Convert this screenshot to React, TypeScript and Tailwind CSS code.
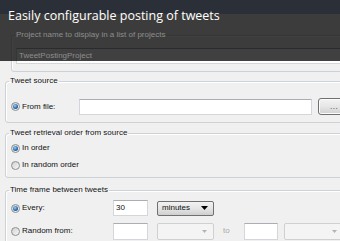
import React from 'react';

const Radio: React.FC<{ checked?: boolean }> = ({ checked }) => (
  <span className="flex h-[9px] w-[9px] shrink-0 items-center justify-center rounded-full border border-[#8e8f8f] bg-gradient-to-br from-[#cfd0d1] to-[#f9f9f9]">
    {checked && (
      <span className="h-[5px] w-[5px] rounded-full bg-[radial-gradient(circle_at_40%_35%,#9fd0f5,#2a6db5_55%,#0e3a70)]" />
    )}
  </span>
);

const TextBox: React.FC<{ className?: string; children?: React.ReactNode }> = ({ className, children }) => (
  <div
    className={
      'flex items-center border border-[#d3d7dc] border-t-[#abadb3] bg-white pl-[2px] ' + (className || '')
    }
  >
    {children}
  </div>
);

const Arrow: React.FC<{ disabled?: boolean }> = ({ disabled }) =>
  disabled ? (
    <svg width="5" height="3" viewBox="0 0 5 3" className="shrink-0">
      <polygon points="0,0 5,0 2.5,3" fill="#b4b4b4" />
    </svg>
  ) : (
    <svg width="7" height="4" viewBox="0 0 7 4" className="shrink-0">
      <polygon points="0,0 7,0 3.5,4" fill="#000" />
    </svg>
  );

// group box, legend sits on the top border like a WinForms GroupBox
const Group: React.FC<{ title: string; className?: string; children: React.ReactNode }> = ({
  title,
  className,
  children,
}) => (
  <fieldset
    className={
      'rounded-[3px] border border-[#cdd2d6] pl-[4px] shadow-[inset_1px_1px_0_#fff] ' + (className || '')
    }
  >
    <legend className="-ml-[1px] px-[1px] leading-[8px]">{title}</legend>
    {children}
  </fieldset>
);

export default function App() {
  return (
    <div className="relative h-[241px] w-[340px] overflow-hidden bg-[#f0f0f0] font-['Liberation_Sans',Arial,sans-serif] text-[8px] text-[#111]">
      {/* dark caption band over the top of the form */}
      <div className="absolute left-0 top-0 z-[5] flex h-[61px] w-full flex-col">
        <div className="h-[14px] bg-[#2b3038]" />
        <div className="flex-1 bg-black/75" />
        <div className="absolute left-[8px] top-[8px] font-['Open_Sans',sans-serif] text-[12.5px] leading-[16px] text-white">
          Easily configurable posting of tweets
        </div>
      </div>

      <div className="pl-[11px] pt-[31px]">
        <fieldset className="w-[360px] rounded-[3px] border border-[#cdd2d6] pb-[7px] pl-[4px] shadow-[inset_1px_1px_0_#fff]">
          <legend className="relative z-10 -ml-[1px] px-[1px] leading-[8px] text-[#8d8d8d]">
            Project name to display in a list of projects
          </legend>
          <TextBox className="mt-[9px] h-[16px] w-[340px]">
            <span className="relative z-10 text-[#8d8d8d]">TweetPostingProject</span>
          </TextBox>
        </fieldset>
      </div>

      <div className="flex flex-col pl-[5px]">
        <Group title="Tweet source" className="mt-[5px] w-[360px] pb-[7px]">
          <div className="mt-[13px] flex h-[17px] items-center">
            <div className="flex w-[69px] items-center gap-[2px] pl-[1px]">
              <Radio checked />
              <span>From file:</span>
            </div>
            <TextBox className="h-[16px] w-[233px]" />
            <div className="ml-[6px] flex h-[17px] w-[28px] items-center justify-start rounded-[3px] border border-[#707070] bg-gradient-to-b from-[#f3f3f3] via-[#e6e6e6] to-[#d0d0d0] pl-[11px] shadow-[inset_0_0_0_1px_#fcfcfc]">
              <span className="leading-[8px] tracking-[0.5px] text-[#333]">...</span>
            </div>
          </div>
        </Group>

        <Group title="Tweet retrieval order from source" className="mt-[6px] w-[360px] pb-[6px]">
          <div className="mt-[5px] flex flex-col gap-[5px]">
            <div className="flex h-[12px] items-center gap-[2px] pl-[1px]">
              <Radio checked />
              <span>In order</span>
            </div>
            <div className="flex h-[12px] items-center gap-[2px] pl-[1px]">
              <Radio />
              <span>In random order</span>
            </div>
          </div>
        </Group>

        <Group title="Time frame between tweets" className="mt-[8px] w-[360px] pb-[6px]">
          <div className="mt-[6px] flex flex-col gap-[7px]">
            <div className="flex h-[16px] items-center">
              <div className="flex w-[103px] items-center gap-[2px] pl-[1px]">
                <Radio checked />
                <span>Every:</span>
              </div>
              <TextBox className="h-[16px] w-[35px]">
                <span>30</span>
              </TextBox>
              <div className="ml-[9px] flex h-[15px] w-[57px] items-center justify-between rounded-[2px] border border-[#707070] bg-gradient-to-b from-[#f2f2f2] via-[#e5e5e5] to-[#cfcfcf] pl-[4px] pr-[5px]">
                <span>minutes</span>
                <Arrow />
              </div>
            </div>
            <div className="flex h-[16px] items-center">
              <div className="flex w-[103px] items-center gap-[2px] pl-[1px]">
                <Radio />
                <span>Random from:</span>
              </div>
              <TextBox className="h-[17px] w-[35px]" />
              <div className="ml-[9px] flex h-[17px] w-[57px] items-center justify-end rounded-[2px] border border-[#d0d0d0] bg-[#f4f4f4] pr-[6px]">
                <Arrow disabled />
              </div>
              <span className="w-[30px] pl-[9px] text-[#a8a8a8]">to</span>
              <TextBox className="h-[17px] w-[34px]" />
              <div className="ml-[6px] flex h-[17px] w-[60px] items-center justify-end rounded-[2px] border border-[#d0d0d0] bg-[#f4f4f4] pr-[6px]">
                <Arrow disabled />
              </div>
            </div>
          </div>
        </Group>
      </div>
    </div>
  );
}
